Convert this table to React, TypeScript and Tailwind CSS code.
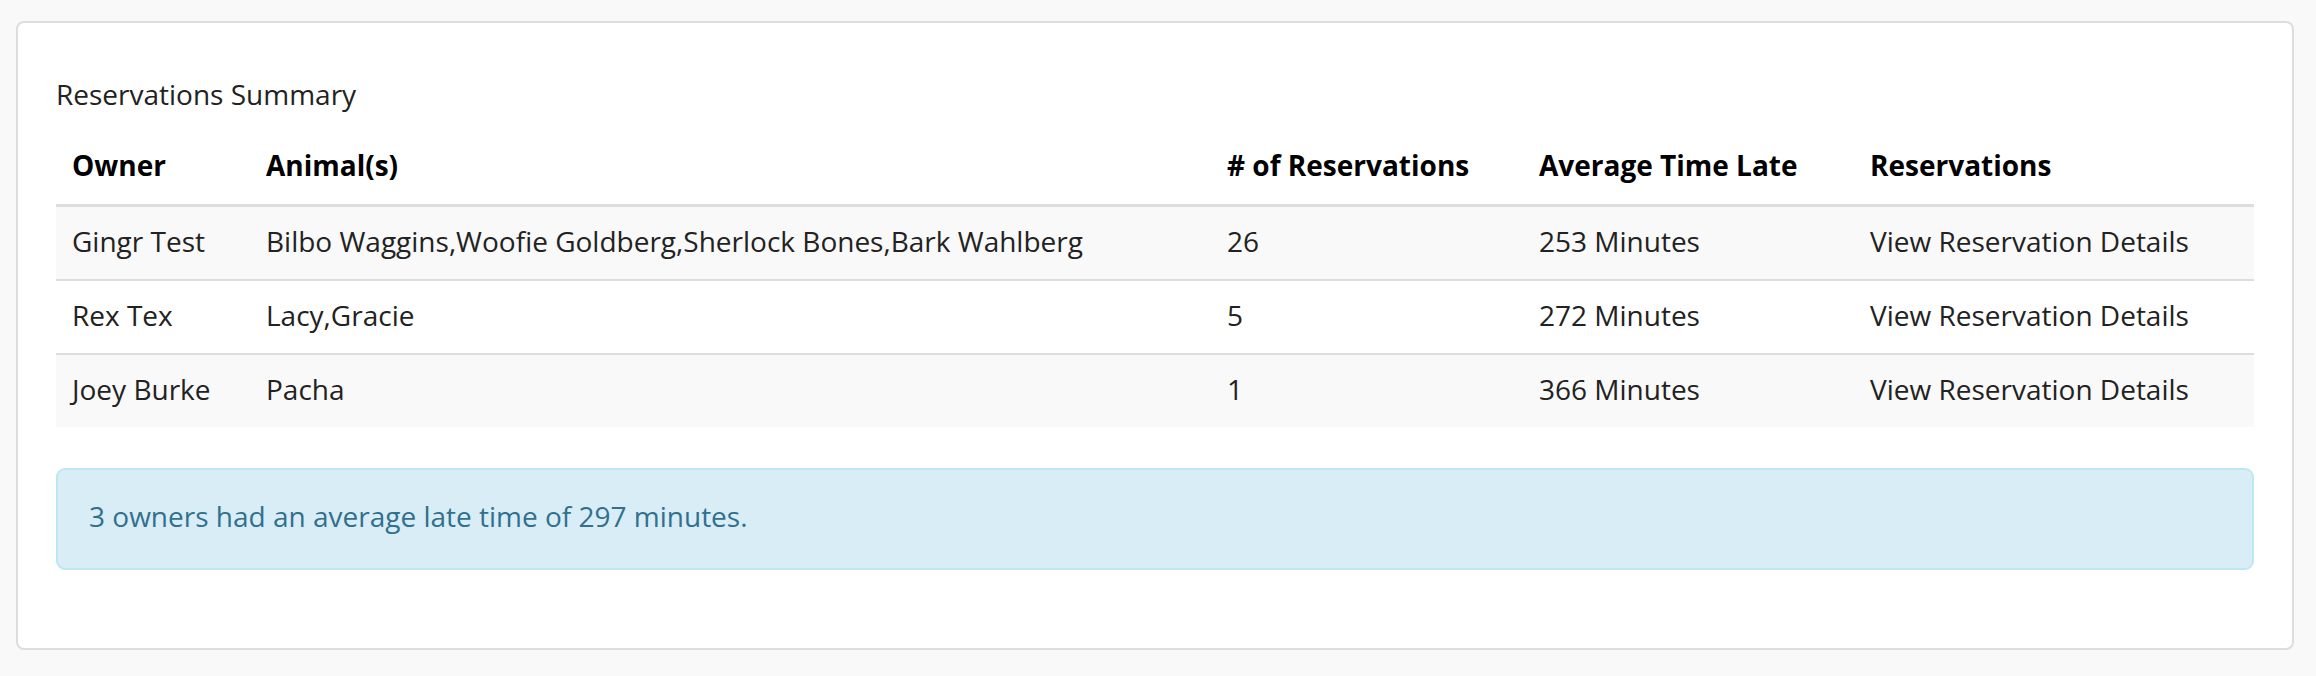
const rows = [
  {
    owner: "Gingr Test",
    animals: "Bilbo Waggins,Woofie Goldberg,Sherlock Bones,Bark Wahlberg",
    count: 26,
    late: "253 Minutes",
  },
  { owner: "Rex Tex", animals: "Lacy,Gracie", count: 5, late: "272 Minutes" },
  { owner: "Joey Burke", animals: "Pacha", count: 1, late: "366 Minutes" },
];

const cell = "px-4 leading-[38px] text-left align-middle";
const th = `${cell} pt-[14px] pb-[20px] font-bold text-black`;
const td = `${cell} pt-[15px] pb-[19px]`;

export default function App() {
  return (
    <div
      className="min-h-[676px] bg-[#f9f9f9] pt-[21px] pl-[16px] pr-[22px] pb-[26px] text-[28px] text-[#222]"
      style={{ fontFamily: '"Open Sans", "Noto Sans", sans-serif' }}
    >
      <div className="rounded-[8px] border-2 border-[#dddddd] bg-white px-[38px] pt-[52px] pb-[78px]">
        <div className="mb-[19px] leading-[38px]">Reservations Summary</div>

        {/* Table */}
        <table className="w-full border-collapse">
          <thead>
            <tr className="border-b-[3px] border-[#dddddd]">
              <th className={`${th} w-[194px]`}>Owner</th>
              <th className={`${th} w-[961px]`}>Animal(s)</th>
              <th className={`${th} w-[312px]`}># of Reservations</th>
              <th className={`${th} w-[331px]`}>Average Time Late</th>
              <th className={th}>Reservations</th>
            </tr>
          </thead>
          <tbody>
            {rows.map((r, i) => (
              <tr
                key={r.owner}
                className={`${i % 2 === 0 ? "bg-[#f9f9f9]" : "bg-white"} ${
                  i < rows.length - 1 ? "border-b-2 border-[#dddddd]" : ""
                }`}
              >
                <td className={td}>{r.owner}</td>
                <td className={td}>{r.animals}</td>
                <td className={td}>{r.count}</td>
                <td className={td}>{r.late}</td>
                <td className={td}>View Reservation Details</td>
              </tr>
            ))}
          </tbody>
        </table>

        {/* Summary */}
        <div className="mt-[41px] rounded-[9px] border-2 border-[#bce8f1] bg-[#d9edf7] px-[31px] pt-[27px] pb-[33px] leading-[38px] text-[#31708f]">
          3 owners had an average late time of 297 minutes.
        </div>
      </div>
    </div>
  );
}
